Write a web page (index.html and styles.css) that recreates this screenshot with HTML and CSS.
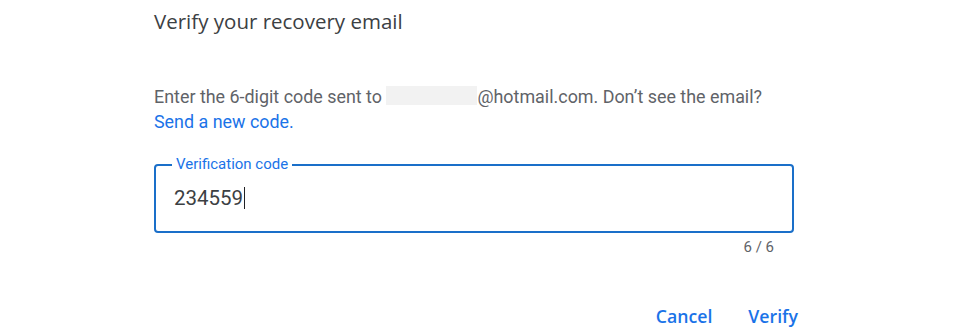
FILE: index.html
```html
<!DOCTYPE html>
<html lang="en">
<head>
<meta charset="utf-8">
<title>Verify your recovery email</title>
<link rel="stylesheet" href="styles.css">
</head>
<body>
<main class="dialog">
  <h1 class="title">Verify your recovery email</h1>
  <p class="desc">Enter the 6-digit code sent to <span class="redact"></span>@hotmail.com. Don’t see the email?<br><a class="link" href="#">Send a new code.</a></p>
  <fieldset class="field">
    <legend class="label">Verification code</legend>
    <div class="value">234559<span class="caret"></span></div>
  </fieldset>
  <div class="counter">6 / 6</div>
  <div class="actions">
    <button class="btn" type="button">Cancel</button>
    <button class="btn" type="button">Verify</button>
  </div>
</main>
</body>
</html>
```

FILE: styles.css
```css
html, body {
  margin: 0;
  padding: 0;
  background: #ffffff;
}
body {
  font-family: Roboto, "Liberation Sans", Arial, sans-serif;
}
.dialog {
  width: 640px;
  margin-left: 154px;
  padding-top: 8px;
}
.title {
  margin: 0;
  font-family: "Open Sans", Roboto, sans-serif;
  font-weight: 400;
  font-size: 20.5px;
  line-height: 26px;
  color: #3c4043;
}
.desc {
  margin: 50px 0 0;
  width: 640px;
  font-size: 17.9px;
  line-height: 25px;
  color: #5f6368;
}
.redact {
  display: inline-block;
  width: 91px;
  height: 19px;
  vertical-align: -2px;
  background: #f2f2f2;
}
.link {
  color: #1a73e8;
  text-decoration: none;
}
.field {
  margin: 23px 0 0;
  padding: 0 18px;
  border: 2px solid #1a6fc9;
  border-radius: 4px;
  box-sizing: border-box;
  height: 76px;
}
.label {
  padding: 0 4px;
  margin-left: -2px;
  font-size: 15px;
  line-height: 15px;
  color: #1a73e8;
}
.value {
  margin-top: 14px;
  font-size: 20.5px;
  line-height: 24px;
  color: #3c4043;
  display: flex;
  align-items: center;
}
.caret {
  display: inline-block;
  width: 1px;
  height: 22px;
  background: #202124;
  margin-left: 1px;
}
.counter {
  margin-top: 5px;
  padding-right: 20px;
  text-align: right;
  font-size: 15px;
  line-height: 18px;
  color: #5f6368;
}
.actions {
  margin-top: 42px;
  margin-right: -12px;
  display: flex;
  justify-content: flex-end;
  gap: 20px;
}
.btn {
  border: none;
  background: none;
  padding: 6px 8px;
  font-family: "Open Sans", Roboto, sans-serif;
  font-weight: 600;
  font-size: 17.7px;
  line-height: 24px;
  color: #1a73e8;
  cursor: pointer;
}
```
